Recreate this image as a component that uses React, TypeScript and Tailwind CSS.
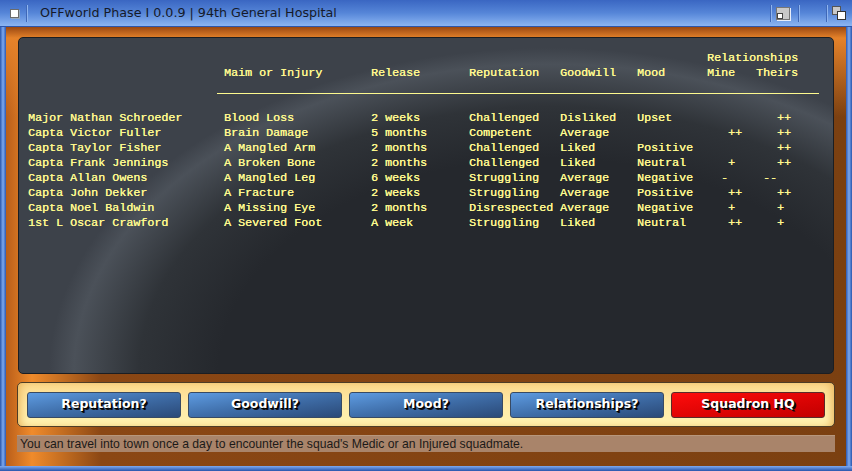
import React from 'react';

type Row = {
  name: string;
  injury: string;
  release: string;
  reputation: string;
  goodwill: string;
  mood: string;
  mine: string;
  theirs: string;
};

const rows: Row[] = [
  { name: 'Major Nathan Schroeder', injury: 'Blood Loss', release: '2 weeks', reputation: 'Challenged', goodwill: 'Disliked', mood: 'Upset', mine: '', theirs: '   ++' },
  { name: 'Capta Victor Fuller', injury: 'Brain Damage', release: '5 months', reputation: 'Competent', goodwill: 'Average', mood: '', mine: '   ++', theirs: '   ++' },
  { name: 'Capta Taylor Fisher', injury: 'A Mangled Arm', release: '2 months', reputation: 'Challenged', goodwill: 'Liked', mood: 'Positive', mine: '', theirs: '   ++' },
  { name: 'Capta Frank Jennings', injury: 'A Broken Bone', release: '2 months', reputation: 'Challenged', goodwill: 'Liked', mood: 'Neutral', mine: '   +', theirs: '   ++' },
  { name: 'Capta Allan Owens', injury: 'A Mangled Leg', release: '6 weeks', reputation: 'Struggling', goodwill: 'Average', mood: 'Negative', mine: '  -', theirs: ' --' },
  { name: 'Capta John Dekker', injury: 'A Fracture', release: '2 weeks', reputation: 'Struggling', goodwill: 'Average', mood: 'Positive', mine: '   ++', theirs: '   ++' },
  { name: 'Capta Noel Baldwin', injury: 'A Missing Eye', release: '2 months', reputation: 'Disrespected', goodwill: 'Average', mood: 'Negative', mine: '   +', theirs: '   +' },
  { name: '1st L Oscar Crawford', injury: 'A Severed Foot', release: 'A week', reputation: 'Struggling', goodwill: 'Liked', mood: 'Neutral', mine: '   ++', theirs: '   +' },
];

const buttons = ['Reputation?', 'Goodwill?', 'Mood?', 'Relationships?'];

// name | injury | release | reputation | goodwill | mood | mine | theirs
const cols = 'grid grid-cols-[196px_147px_98px_91px_77px_70px_49px_1fr]';

function TitleSep() {
  return <div className="w-[2px] h-[17px] border-l border-[#3f68b8] border-r border-r-[#8fb5ef]" />;
}

function TitleBar() {
  return (
    <div className="h-[27px] flex items-center bg-gradient-to-b from-[#3a66c2] via-[#5686d8] to-[#8cb5f2] border-b border-[#2c56ac] font-['DejaVu_Sans',sans-serif] text-[12.7px] text-[#151a2a]">
      <div className="ml-[10px] w-[9px] h-[9px] bg-white border border-[#6b6b6b] shadow-[1px_1px_0_#9ab]" />
      <div className="ml-[7px]"><TitleSep /></div>
      <span className="ml-[12px] whitespace-pre">OFFworld Phase I 0.0.9 | 94th General Hospital</span>
      <div className="ml-auto flex items-center">
        <TitleSep />
        {/* maximise */}
        <div className="relative ml-[4px] mr-[8px] w-[14px] h-[13px] bg-[#c9c9c9] border border-[#777] shadow-[1px_1px_0_#e8eefa]">
          <div className="absolute left-0 bottom-0 w-[6px] h-[6px] bg-white border border-[#444]" />
        </div>
        <TitleSep />
        <div className="w-[26px]" />
        <TitleSep />
        {/* restore */}
        <div className="relative ml-[4px] mr-[6px] w-[14px] h-[14px]">
          <div className="absolute left-0 top-0 w-[9px] h-[9px] bg-[#c9c9c9] border border-[#555]" />
          <div className="absolute right-0 bottom-0 w-[9px] h-[9px] bg-white border border-[#333]" />
        </div>
      </div>
    </div>
  );
}

function Cell({ children }: { children: React.ReactNode }) {
  return <div className="whitespace-pre">{children}</div>;
}

function SquadTable() {
  return (
    <div className="h-[337px] mx-[1px] rounded-[5px] border border-[#1c1e22] pt-[13px] pl-[9px] font-['Liberation_Mono',monospace] text-[11.7px] leading-[15px] text-[#fdf98e] [text-shadow:0.2px_0_0_#fdf98e] bg-[radial-gradient(ellipse_500px_325px_at_530px_100%,#25282d_66%,#2f3338_82%,#4b5159_95%,#3d424a_100%)]">
      <div className={cols}>
        <div className="col-span-6" />
        <div className="col-span-2 whitespace-pre">Relationships</div>
        <Cell>{''}</Cell>
        <Cell>Maim or Injury</Cell>
        <Cell>Release</Cell>
        <Cell>Reputation</Cell>
        <Cell>Goodwill</Cell>
        <Cell>Mood</Cell>
        <Cell>Mine</Cell>
        <Cell>Theirs</Cell>
      </div>
      <div className="ml-[189px] mt-[12px] w-[602px] h-px bg-[#fdf98e]" />
      <div className={`${cols} mt-[17px]`}>
        {rows.map((r) => (
          <React.Fragment key={r.name}>
            <Cell>{r.name}</Cell>
            <Cell>{r.injury}</Cell>
            <Cell>{r.release}</Cell>
            <Cell>{r.reputation}</Cell>
            <Cell>{r.goodwill}</Cell>
            <Cell>{r.mood}</Cell>
            <Cell>{r.mine}</Cell>
            <Cell>{r.theirs}</Cell>
          </React.Fragment>
        ))}
      </div>
    </div>
  );
}

function ActionBar() {
  return (
    <div className="h-[45px] flex items-center gap-[7px] px-[9px] rounded-[5px] border border-[#4d3d27] bg-gradient-to-b from-[#fbd88c] via-[#ffeaa6] to-[#fff2b0] shadow-[inset_6px_0_8px_-4px_#e9b55e,inset_-6px_0_8px_-4px_#e9b55e]">
      {buttons.map((b) => (
        <button
          key={b}
          className="w-[154px] h-[26px] rounded-[3px] border border-[#384a63] bg-gradient-to-br from-[#5e9ce2] via-[#3f6ea9] to-[#2b4a78] font-['DejaVu_Sans',sans-serif] font-bold text-[12.5px] text-white [text-shadow:1px_1px_0_#000,2px_2px_0_#111]"
        >
          {b}
        </button>
      ))}
      <button className="w-[154px] h-[26px] rounded-[3px] border border-[#5a2a2a] bg-gradient-to-br from-[#ff0c0c] to-[#c20000] font-['DejaVu_Sans',sans-serif] font-bold text-[12.5px] text-white [text-shadow:1px_1px_0_#000,2px_2px_0_#111]">
        Squadron HQ
      </button>
    </div>
  );
}

export default function App() {
  return (
    <div className="w-[852px] h-[471px] flex flex-col bg-[#2e5cb8] overflow-hidden">
      <TitleBar />
      <div className="flex-1 flex min-h-0">
        <div className="w-[6px] bg-gradient-to-r from-[#2a55ac] via-[#7eaaf0] to-[#2c58b2]" />
        <div className="flex-1 flex flex-col px-[11px] pt-[10px] bg-[linear-gradient(to_bottom,#9a4812_0px,#e5822a_11px,rgba(229,130,42,0)_90px),linear-gradient(to_right,#b95e1a_0px,#f08b2b_26px,#8b4714_95px,#7b4011_100%)]">
          <SquadTable />
          <div className="mt-[8px]">
            <ActionBar />
          </div>
          <div className="mt-[8px] h-[17px] flex items-center pl-[3px] bg-[#a9846a] border-t border-[#b8977c] font-['Liberation_Sans',sans-serif] text-[12.2px] text-[#1c1a18] whitespace-pre">
            You can travel into town once a day to encounter the squad's Medic or an Injured squadmate.
          </div>
        </div>
        <div className="w-[6px] bg-gradient-to-r from-[#2c58b2] via-[#7eaaf0] to-[#2a55ac]" />
      </div>
      <div className="h-[5px] bg-gradient-to-b from-[#7eaaf0] to-[#2a55ac]" />
    </div>
  );
}
